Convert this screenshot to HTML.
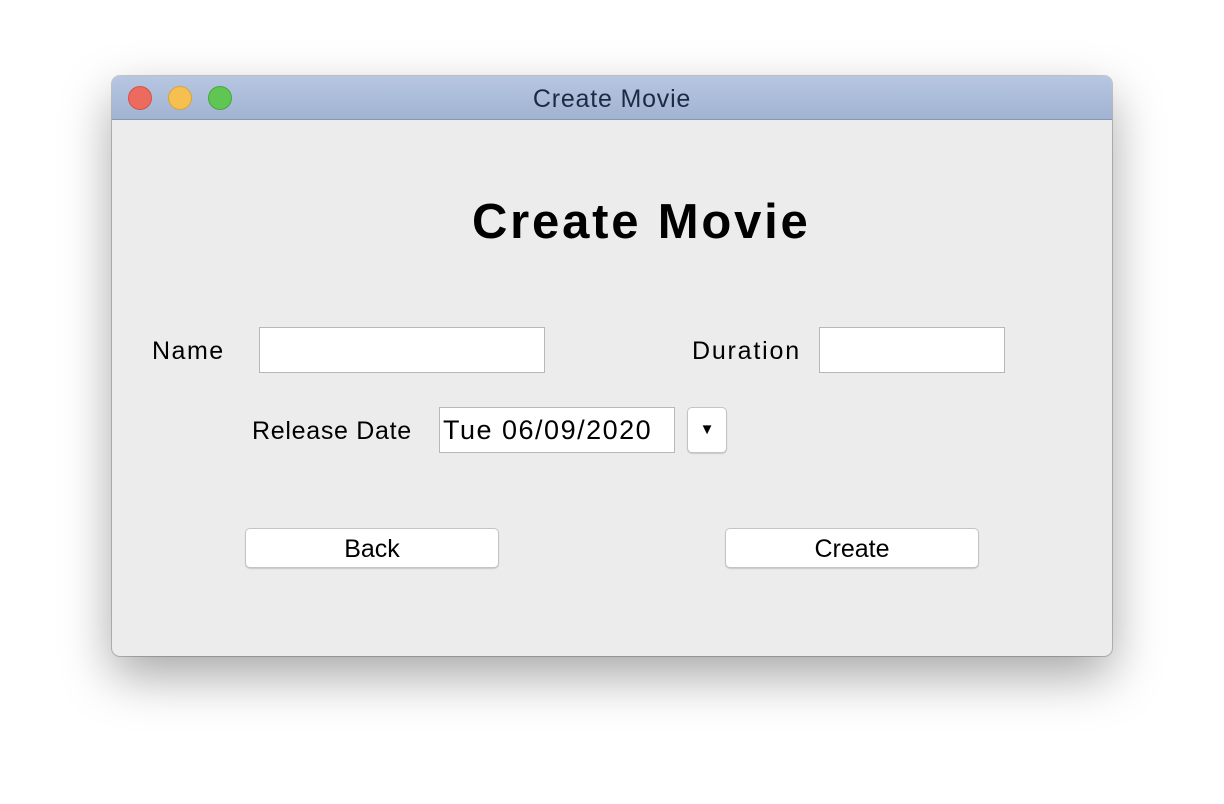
<!DOCTYPE html>
<html><head><style>
body{margin:0;width:1224px;height:804px;background:#fff;position:relative;font-family:"Liberation Sans","DejaVu Sans",sans-serif;overflow:hidden}
.win{position:absolute;left:112px;top:76px;width:1000px;height:580px;border-radius:8px;background:#ececec;box-shadow:0 20px 50px rgba(0,0,0,.35),0 0 0 1px rgba(0,0,0,.2);overflow:hidden}
.tb{position:absolute;left:0;top:0;width:1000px;height:43px;background:linear-gradient(#b7c7e2,#a1b3d2);border-bottom:1px solid #8796b2}
.dot{position:absolute;top:10px;width:24px;height:24px;border-radius:50%}
.tt{position:absolute;left:0;width:1000px;top:9px;text-align:center;font-size:25px;letter-spacing:0.8px;color:#1d2a45}
.a{position:absolute;color:#000;white-space:nowrap}
.f{position:absolute;background:#fff;border:1px solid #b8b8b8;box-sizing:border-box}
.btn{position:absolute;background:#fff;border:1px solid #c4c4c4;border-radius:5px;box-sizing:border-box;text-align:center;font-size:25px;line-height:40px;box-shadow:0 1px 1px rgba(0,0,0,.15)}
</style></head><body>
<div class="win">
<div class="tb">
<div class="dot" style="left:16px;background:#ed6a5e;border:1px solid #d45248;box-sizing:border-box"></div>
<div class="dot" style="left:56px;background:#f5c04f;border:1px solid #d9a43b;box-sizing:border-box"></div>
<div class="dot" style="left:96px;background:#5fc653;border:1px solid #4aa63d;box-sizing:border-box"></div>
<div class="tt">Create Movie</div>
</div>
<div class="a" style="left:360px;top:118px;font-size:49px;font-weight:bold;letter-spacing:2.8px">Create Movie</div>
<div class="a" style="left:40px;top:261px;font-size:25px;letter-spacing:1.5px">Name</div>
<div class="f" style="left:147px;top:251px;width:286px;height:46px"></div>
<div class="a" style="left:580px;top:261px;font-size:25px;letter-spacing:1.8px">Duration</div>
<div class="f" style="left:707px;top:251px;width:186px;height:46px"></div>
<div class="a" style="left:140px;top:341px;font-size:25px;letter-spacing:0.7px">Release Date</div>
<div class="f" style="left:327px;top:331px;width:236px;height:46px"></div>
<div class="a" style="left:331px;top:339px;font-size:27px;letter-spacing:1.5px">Tue 06/09/2020</div>
<div class="btn" style="left:575px;top:331px;width:40px;height:46px;line-height:44px;font-size:15px">&#9660;</div>
<div class="btn" style="left:133px;top:452px;width:254px;height:40px">Back</div>
<div class="btn" style="left:613px;top:452px;width:254px;height:40px">Create</div>
</div>
</body></html>
